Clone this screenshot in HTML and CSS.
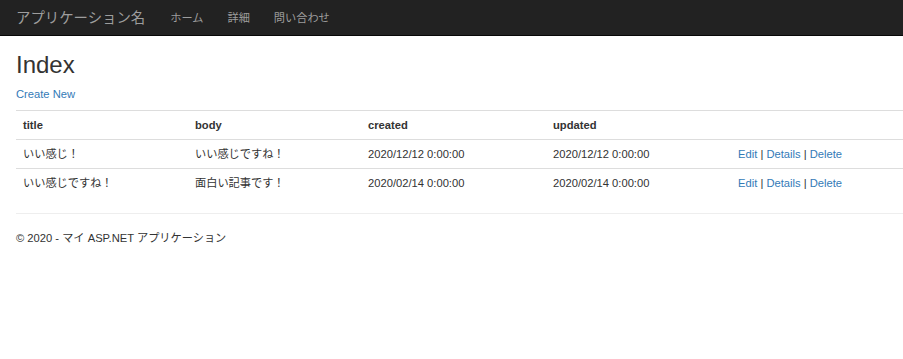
FILE: index.html
```html
<!DOCTYPE html>
<html lang="ja">
<head>
<meta charset="utf-8">
<title>Index</title>
<link rel="stylesheet" href="styles.css">
</head>
<body>
<nav class="navbar">
  <a class="brand" href="#">アプリケーション名</a>
  <ul class="nav">
    <li><a href="#">ホーム</a></li>
    <li><a href="#">詳細</a></li>
    <li><a href="#">問い合わせ</a></li>
  </ul>
</nav>
<div class="body-content">
  <h2 class="page-title">Index</h2>
  <p class="create"><a href="#">Create New</a></p>
  <table class="table">
    <colgroup>
      <col class="c1"><col class="c2"><col class="c3"><col class="c4"><col>
    </colgroup>
    <thead>
      <tr><th>title</th><th>body</th><th>created</th><th>updated</th><th></th></tr>
    </thead>
    <tbody>
      <tr>
        <td>いい感じ！</td>
        <td>いい感じですね！</td>
        <td>2020/12/12 0:00:00</td>
        <td>2020/12/12 0:00:00</td>
        <td><a href="#">Edit</a> | <a href="#">Details</a> | <a href="#">Delete</a></td>
      </tr>
      <tr>
        <td>いい感じですね！</td>
        <td>面白い記事です！</td>
        <td>2020/02/14 0:00:00</td>
        <td>2020/02/14 0:00:00</td>
        <td><a href="#">Edit</a> | <a href="#">Details</a> | <a href="#">Delete</a></td>
      </tr>
    </tbody>
  </table>
  <hr class="sep">
  <footer class="footer">
    <p>© 2020 - マイ ASP.NET アプリケーション</p>
  </footer>
</div>
</body>
</html>
```

FILE: styles.css
```css
html, body {
  margin: 0;
  padding: 0;
}
body {
  font-family: "Liberation Sans", Arial, "Noto Sans CJK JP", sans-serif;
  font-size: 11.2px;
  line-height: 16px;
  color: #333;
  background: #fff;
}
a {
  color: #337ab7;
  text-decoration: none;
}
.navbar {
  display: flex;
  align-items: center;
  height: 35px;
  background: #222;
  border-bottom: 1px solid #080808;
  padding: 0 16px;
}
.brand {
  font-size: 14.4px;
  color: #9d9d9d;
  line-height: 20px;
  margin-right: 13px;
}
.nav {
  display: flex;
  list-style: none;
  margin: 0;
  padding: 0;
}
.nav li a {
  display: block;
  color: #9d9d9d;
  padding: 0 12px;
  line-height: 20px;
}
.body-content {
  padding: 0 0 0 16px;
}
.page-title {
  font-size: 24px;
  font-weight: 500;
  line-height: 26px;
  margin: 16px 0 0;
}
.create {
  margin: 8px 0 8px;
}
.table {
  width: 100%;
  border-collapse: collapse;
  border-spacing: 0;
  margin-bottom: 16px;
}
.c1 { width: 172px; }
.c2 { width: 173px; }
.c3 { width: 185px; }
.c4 { width: 185px; }
.table th,
.table td {
  text-align: left;
  padding: 6px 7px;
  line-height: 16px;
  border-top: 1px solid #ddd;
  vertical-align: top;
}
.table th {
  font-weight: bold;
  border-bottom: 1px solid #ddd;
}
.sep {
  border: 0;
  border-top: 1px solid #eee;
  margin: 0;
}
.footer p {
  margin: 16px 0;
}
```
